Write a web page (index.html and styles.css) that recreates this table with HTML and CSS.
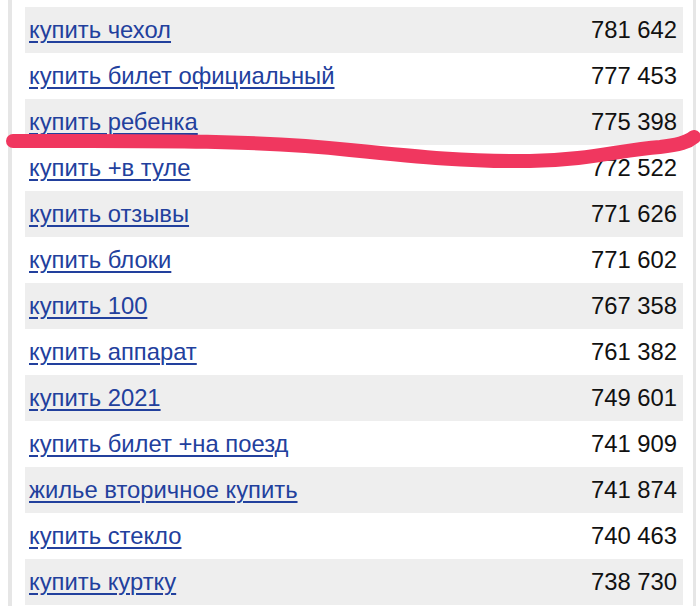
FILE: index.html
```html
<!DOCTYPE html>
<html lang="ru">
<head>
<meta charset="utf-8">
<link rel="stylesheet" href="styles.css">
</head>
<body>
<div class="frame">
  <div class="table">
    <div class="row"><a class="q" href="#">купить чехол</a><span class="n">781 642</span></div>
    <div class="row"><a class="q" href="#">купить билет официальный</a><span class="n">777 453</span></div>
    <div class="row"><a class="q" href="#">купить ребенка</a><span class="n">775 398</span></div>
    <div class="row"><a class="q" href="#">купить +в туле</a><span class="n">772 522</span></div>
    <div class="row"><a class="q" href="#">купить отзывы</a><span class="n">771 626</span></div>
    <div class="row"><a class="q" href="#">купить блоки</a><span class="n">771 602</span></div>
    <div class="row"><a class="q" href="#">купить 100</a><span class="n">767 358</span></div>
    <div class="row"><a class="q" href="#">купить аппарат</a><span class="n">761 382</span></div>
    <div class="row"><a class="q" href="#">купить 2021</a><span class="n">749 601</span></div>
    <div class="row"><a class="q" href="#">купить билет +на поезд</a><span class="n">741 909</span></div>
    <div class="row"><a class="q" href="#">жилье вторичное купить</a><span class="n">741 874</span></div>
    <div class="row"><a class="q" href="#">купить стекло</a><span class="n">740 463</span></div>
    <div class="row"><a class="q" href="#">купить куртку</a><span class="n">738 730</span></div>
  </div>
</div>
<svg class="scribble" width="700" height="606" viewBox="0 0 700 606">
  <path d="M13,141 C 120,141 250,139 350,150 C 420,157 470,162 530,161 C 590,160 620,150 660,147 C 680,145 688,142 694,137" fill="none" stroke="#f0375f" stroke-width="14" stroke-linecap="round" stroke-linejoin="round"/>
</svg>
</body>
</html>
```

FILE: styles.css
```css
html, body {
  margin: 0;
  padding: 0;
  background: #ffffff;
}
body {
  width: 700px;
  height: 606px;
  overflow: hidden;
  position: relative;
  font-family: "Liberation Sans", Arial, sans-serif;
}
.frame {
  margin-left: 8px;
  width: 688px;
  height: 606px;
  box-sizing: border-box;
  border-left: 4px solid #e6e6e6;
  border-right: 3px solid #e6e6e6;
  padding: 7px 10px 0 13px;
}
.table {
  display: flex;
  flex-direction: column;
}
.row {
  height: 46px;
  display: flex;
  align-items: center;
  justify-content: space-between;
  padding: 0 6px 0 4px;
}
.row:nth-child(odd) {
  background: #eeeeee;
}
.q {
  color: #22409d;
  font-size: 23.8px;
  text-decoration: underline;
  text-decoration-thickness: 1.8px;
  text-underline-offset: 3px;
}
.n {
  color: #111111;
  font-size: 23.8px;
}
.scribble {
  position: absolute;
  left: 0;
  top: 0;
  pointer-events: none;
}
```
